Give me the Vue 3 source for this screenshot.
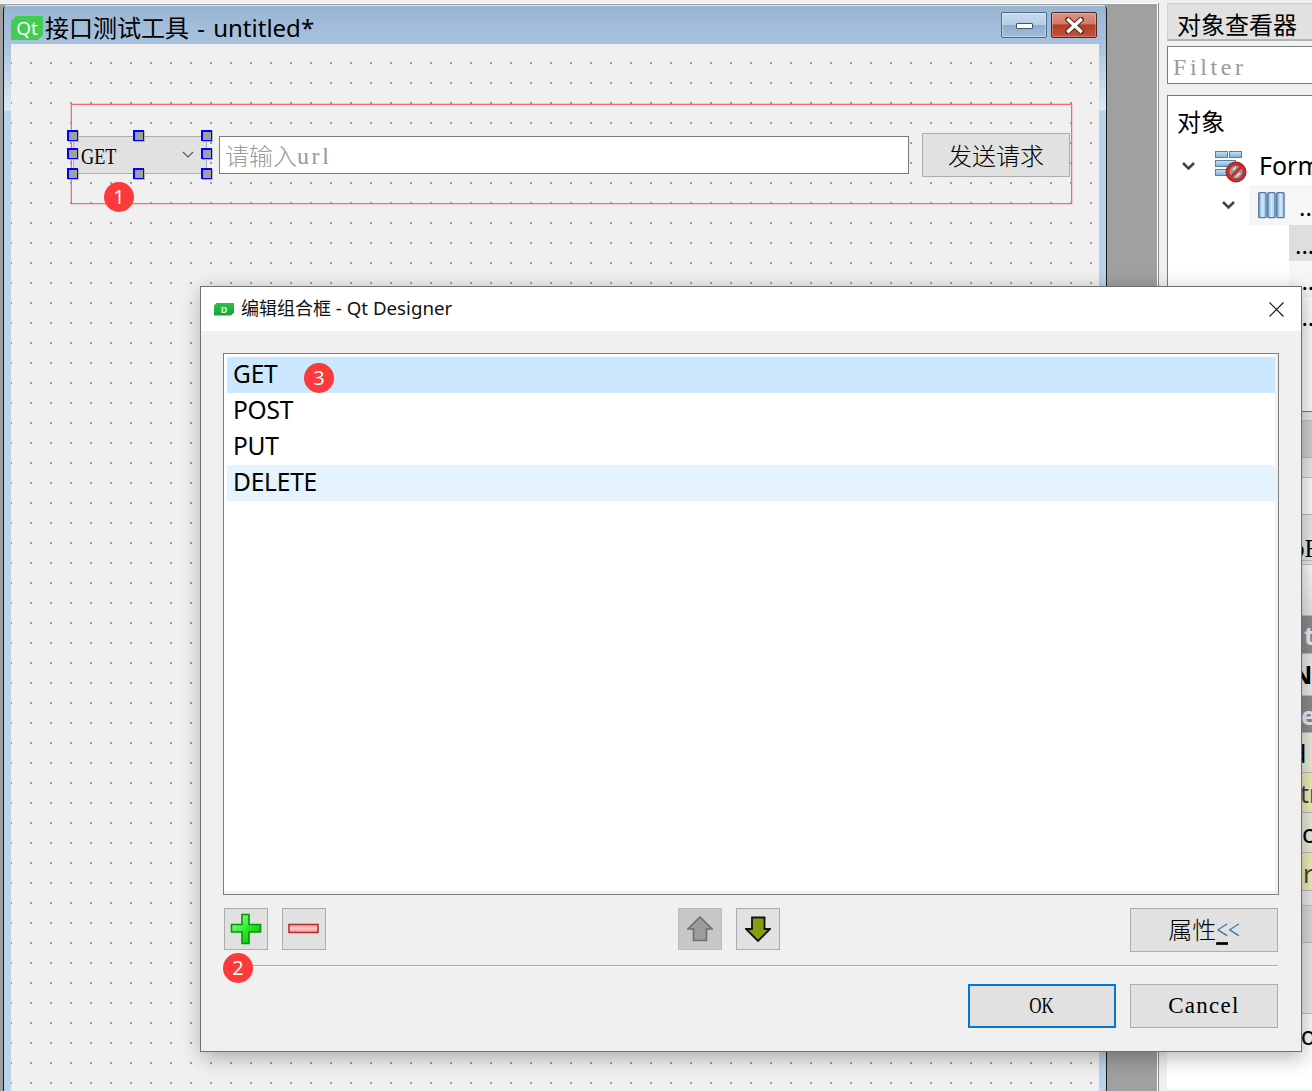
<script setup>
const handles = [
  { x: 0, y: 0 }, { x: 66, y: 0 }, { x: 134, y: 0 },
  { x: 0, y: 18 }, { x: 134, y: 18 },
  { x: 0, y: 38 }, { x: 66, y: 38 }, { x: 134, y: 38 },
]
const items = [
  { label: 'GET', cls: 'selected' },
  { label: 'POST', cls: '' },
  { label: 'PUT', cls: '' },
  { label: 'DELETE', cls: 'hover' },
]
const propRows = [
  { h: 9, cls: 'pale' },
  { h: 37, cls: 'mid' },
  { h: 20, cls: 'pale' },
  { h: 37, cls: 'blank' },
  { h: 46, cls: 'pale serif', text: 'bE', pad: 125 },
  { h: 4, cls: 'pale' },
  { h: 51, cls: 'fade' },
  { h: 38, cls: 'dark', text: 't', pad: 137 },
  { h: 42, cls: 'pale bold', text: 'N.', pad: 125 },
  { h: 37, cls: 'dark', text: 'e', pad: 134 },
  { h: 40, cls: 'cream', text: 'd', pad: 124 },
  { h: 40, cls: 'yellow', text: 'tr', pad: 133 },
  { h: 40, cls: 'cream', text: 'c', pad: 135 },
  { h: 38, cls: 'yellow', text: 'r', pad: 136 },
  { h: 15, cls: 'pale' },
  { h: 37, cls: 'mid2' },
  { h: 71, cls: 'pale' },
  { h: 75, cls: 'blank', text: 'ro', pad: 124, top: true },
]
</script>

<template>
  <div class="desktop">
    <div class="mdi">
      <div class="window">
        <div class="titlebar">
          <span class="qt-logo">Qt</span>
          <span class="win-title">接口测试工具 - untitled*</span>
          <div class="win-buttons">
            <div class="win-btn min"><i class="dash"></i></div>
            <div class="win-btn close">
              <svg width="19" height="17" viewBox="0 0 19 17">
                <path d="M3 2.5 L16 14.5 M16 2.5 L3 14.5" stroke="#5a2a22" stroke-width="5.5" stroke-linecap="square" />
                <path d="M3.5 3 L15.5 14 M15.5 3 L3.5 14" stroke="#fff" stroke-width="3.4" stroke-linecap="square" />
              </svg>
            </div>
          </div>
        </div>
        <div class="canvas">
          <div class="form">
            <div class="combo">
              <span class="get-text">GET</span>
              <svg class="combo-arrow" width="12" height="7" viewBox="0 0 12 7">
                <path d="M1 1 L6 6 L11 1" fill="none" stroke="#555" stroke-width="1.1" />
              </svg>
              <i
                v-for="(h, i) in handles"
                :key="i"
                class="handle"
                :style="{ left: h.x + 'px', top: h.y + 'px' }"
              ></i>
            </div>
            <div class="line-edit">请输入<span class="url">url</span></div>
            <div class="send">发送请求</div>
          </div>
        </div>
      </div>
      <span class="badge b1">1</span>
    </div>

    <div class="panel">
      <div class="panel-head">对象查看器</div>
      <div class="filter">Filter</div>
      <div class="tree">
        <div class="tree-col">对象</div>
        <div class="tree-row form-row">
          <svg class="chev" width="15" height="10" viewBox="0 0 15 10">
            <path d="M2 2 L7.5 7.5 L13 2" fill="none" stroke="#444" stroke-width="2.6" />
          </svg>
          <svg class="form-icon" width="33" height="33" viewBox="0 0 33 33">
            <defs>
              <linearGradient id="cell" x1="0" x2="0" y1="0" y2="1">
                <stop offset="0" stop-color="#c4e4fa" />
                <stop offset="1" stop-color="#7fb0d8" />
              </linearGradient>
            </defs>
            <g fill="url(#cell)" stroke="#5e7f9f">
              <rect x="1.5" y="1.5" width="12" height="6" />
              <rect x="15.5" y="1.5" width="12" height="6" />
              <rect x="1.5" y="10.5" width="20" height="6" />
              <rect x="1.5" y="19.5" width="14" height="6" />
            </g>
            <circle cx="22" cy="22" r="10" fill="#c4302a" stroke="#a01c1c" />
            <circle cx="22" cy="22" r="6.5" fill="#9a9a9a" />
            <path d="M16 28 L28 16" stroke="#c4302a" stroke-width="3" />
            <path d="M19 20 L22 17 M22 27 L26 23" stroke="#e4e4e4" stroke-width="1.5" />
          </svg>
          <span class="form-name">Form</span>
        </div>
        <div class="tree-row layout-row">
          <svg class="chev" width="15" height="10" viewBox="0 0 15 10">
            <path d="M2 2 L7.5 7.5 L13 2" fill="none" stroke="#444" stroke-width="2.6" />
          </svg>
          <div class="layout-cell">
            <svg class="col-icon" width="27" height="27" viewBox="0 0 27 27">
              <defs>
                <linearGradient id="col" x1="0" x2="1" y1="0" y2="0">
                  <stop offset="0" stop-color="#6fa6d6" />
                  <stop offset="0.5" stop-color="#d6ecfc" />
                  <stop offset="1" stop-color="#8fbde6" />
                </linearGradient>
              </defs>
              <g fill="url(#col)" stroke="#5b79a0" stroke-width="1.3">
                <rect x="0.7" y="0.7" width="7.4" height="25" rx="1" />
                <rect x="9.7" y="0.7" width="7.4" height="25" rx="1" />
                <rect x="18.7" y="0.7" width="7.4" height="25" rx="1" />
              </g>
            </svg>
            <span class="dots">..</span>
          </div>
        </div>
        <div class="tree-row child selected-child"><span class="dots">...</span></div>
        <div class="tree-row child light-child"><span class="dots">...</span></div>
        <div class="tree-row child"><span class="dots">...</span></div>
      </div>
      <div class="props">
        <div
          v-for="(r, i) in propRows"
          :key="i"
          class="prop"
          :class="[r.cls, { 'at-top': r.top }]"
          :style="{ height: r.h + 'px', paddingLeft: (r.pad || 125) + 'px' }"
        >{{ r.text }}</div>
      </div>
    </div>

    <div class="dialog">
      <div class="dlg-title">
        <span class="d-logo">D</span>
        <span class="dlg-text">编辑组合框<span class="dlg-latin"> - Qt Designer</span></span>
        <svg class="dlg-close" width="15" height="15" viewBox="0 0 15 15">
          <path d="M0.5 0.5 L14.5 14.5 M14.5 0.5 L0.5 14.5" stroke="#111" stroke-width="1.1" />
        </svg>
      </div>
      <div class="dlg-body">
        <div class="list">
          <div v-for="it in items" :key="it.label" class="list-item" :class="it.cls">{{ it.label }}</div>
          <span class="badge b3">3</span>
        </div>
        <div class="tools">
          <div class="tool">
            <svg width="32" height="32" viewBox="0 0 32 32">
              <defs>
                <linearGradient id="plusG" x1="0" x2="1" y1="0" y2="1">
                  <stop offset="0" stop-color="#b8f8b0" />
                  <stop offset="0.5" stop-color="#30e830" />
                  <stop offset="1" stop-color="#00b400" />
                </linearGradient>
              </defs>
              <path d="M12 1.5 H19 V11.5 H30.5 V19 H19 V30.5 H12 V19 H1.5 V11.5 H12 Z" fill="url(#plusG)" stroke="#009a00" stroke-width="1.6" />
            </svg>
          </div>
          <div class="tool">
            <svg width="32" height="12" viewBox="0 0 32 12">
              <defs>
                <linearGradient id="minusG" x1="0" x2="0" y1="0" y2="1">
                  <stop offset="0" stop-color="#ff9a9a" />
                  <stop offset="0.5" stop-color="#ffc4c4" />
                  <stop offset="1" stop-color="#ff8c8c" />
                </linearGradient>
              </defs>
              <rect x="1" y="1.5" width="29" height="8" fill="url(#minusG)" stroke="#b43232" stroke-width="1.6" />
            </svg>
          </div>
          <div class="tool-gap"></div>
          <div class="tool disabled">
            <svg width="26" height="26" viewBox="0 0 26 26">
              <path d="M13 1 L25 13 H19.5 V24.5 H6.5 V13 H1 Z" fill="#9c9c9c" stroke="#6e6e6e" stroke-width="1.6" />
            </svg>
          </div>
          <div class="tool">
            <svg width="26" height="26" viewBox="0 0 26 26">
              <path d="M7 1.5 H19.5 V13 H25 L13 25 L1 13 H7 Z" fill="#8a9c14" stroke="#111" stroke-width="1.8" />
            </svg>
          </div>
          <div class="prop-btn">属性<span class="lt"><u>&lt;</u>&lt;</span></div>
        </div>
        <div class="sep"><span class="badge b2">2</span></div>
        <div class="actions">
          <div class="act ok"><span class="ok-text">OK</span></div>
          <div class="act"><span class="cancel-text">Cancel</span></div>
        </div>
      </div>
    </div>
  </div>
</template>

<style scoped>
.desktop {
  position: relative;
  display: flex;
  width: 1312px;
  height: 1091px;
  overflow: hidden;
  background: #f0f0f0;
  font-family: "Noto Sans", "Noto Sans CJK SC", sans-serif;
  color: #000;
}
.mdi {
  position: relative;
  flex: 0 0 1157px;
  margin-top: 3px;
  background: #a0a0a0;
  border-top: 1px solid #fbfbfb;
  border-right: 1px solid #fff;
  box-shadow: 1px 0 0 #8a8a8a;
}
.window {
  position: absolute;
  left: 3px;
  top: 1px;
  width: 1104px;
  height: 1200px;
  box-sizing: border-box;
  border: 1px solid #1a1a1a;
  border-top-color: #dfe8f2;
  border-radius: 5px 5px 0 0;
  background: linear-gradient(#9ab5d2 0, #a9c3df 40px, #dce9f6 104px, #b9d3ec 105px, #b9d3ec 100%);
}
.titlebar {
  display: flex;
  align-items: center;
  height: 38px;
  padding: 0 9px 0 7px;
}
.qt-logo {
  display: flex;
  align-items: center;
  justify-content: center;
  width: 32px;
  height: 24px;
  margin-top: 6px;
  background: #41cd52;
  color: #fff;
  font: 19px/24px "Open Sans", sans-serif;
  clip-path: polygon(5px 0, 100% 0, 100% calc(100% - 5px), calc(100% - 5px) 100%, 0 100%, 0 5px);
}
.win-title {
  margin: 6px 0 0 2px;
  font-size: 24px;
  line-height: 30px;
  word-spacing: 2px;
}
.win-buttons {
  display: flex;
  gap: 4px;
  margin-left: auto;
  align-self: flex-start;
  margin-top: 6px;
}
.win-btn {
  display: flex;
  align-items: center;
  justify-content: center;
  box-sizing: border-box;
  width: 46px;
  height: 26px;
  border-radius: 2px;
}
.min {
  border: 1px solid #50698a;
  background: linear-gradient(#c8daed 0, #b6cce4 50%, #8eabcb 52%, #a3bfdb 100%);
  box-shadow: inset 0 0 0 1px rgba(255, 255, 255, 0.35);
}
.dash {
  display: block;
  width: 17px;
  height: 6px;
  margin-top: 1px;
  box-sizing: border-box;
  background: #fff;
  border: 1px solid #3f5570;
  border-radius: 1px;
}
.close {
  border: 1px solid #4e2626;
  background: linear-gradient(#de9284 0, #cf7b6b 45%, #b33f27 50%, #c4533a 100%);
  box-shadow: inset 0 0 0 1px rgba(255, 255, 255, 0.25);
}
.canvas {
  margin: 0 7px;
  height: 1200px;
  padding: 60px 0 0 60px;
  background-color: #f0f0f0;
  background-image: conic-gradient(at 2px 2px, transparent 75%, #9a9a9a 0);
  background-size: 20px 20px;
  background-position: -1px 18px;
}
.form {
  display: flex;
  align-items: flex-start;
  box-sizing: border-box;
  width: 1001px;
  height: 100px;
  padding: 31px 0 0 1px;
  border: 1px solid #f46c72;
  box-shadow: 0 0 0 0.6px rgba(244, 110, 110, 0.45);
}
.combo {
  position: relative;
  display: flex;
  align-items: center;
  box-sizing: border-box;
  width: 134px;
  height: 38px;
  background: #e1e1e1;
  border: 1px solid #adadad;
}
.get-text {
  display: inline-block;
  margin: 2px 0 0 7px;
  font: 24px/30px "Liberation Serif", serif;
  transform: scaleX(0.76);
  transform-origin: left center;
}
.combo-arrow {
  position: absolute;
  left: 108px;
  top: 14px;
}
.handle {
  position: absolute;
  box-sizing: border-box;
  display: block;
  width: 11px;
  height: 11px;
  margin: -7px 0 0 -7px;
  background: #a0a0a0;
  border-style: solid;
  border-width: 2px 1px 1px 2px;
  border-color: #0000ff;
  box-shadow: 1px 1px 0 #b4b4b4;
}
.line-edit {
  display: flex;
  align-items: center;
  box-sizing: border-box;
  width: 690px;
  height: 38px;
  margin-left: 12px;
  padding: 2px 0 0 5px;
  background: #fff;
  border: 1px solid #7a7a7a;
  color: #9a9a9a;
  font-size: 24px;
  font-weight: 300;
  line-height: 34px;
}
.url {
  font-family: "Liberation Serif", serif;
  font-weight: 400;
  letter-spacing: 2.6px;
  font-size: 24px;
}
.send {
  display: flex;
  align-items: center;
  justify-content: center;
  box-sizing: border-box;
  width: 148px;
  height: 44px;
  margin: -3px 0 0 13px;
  padding-top: 1px;
  background: #e1e1e1;
  border: 1px solid #adadad;
  font-size: 24px;
  font-weight: 300;
  line-height: 30px;
}
.badge {
  position: absolute;
  display: flex;
  align-items: center;
  justify-content: center;
  width: 30px;
  height: 30px;
  border-radius: 50%;
  background: #fc3a3c;
  color: #fff;
  font: 20px/30px "Open Sans", sans-serif;
  z-index: 3;
}
.b1 {
  left: 104px;
  top: 178px;
}
.panel {
  flex: 1;
  min-width: 0;
  padding: 3px 0 0 9px;
  overflow: hidden;
}
.panel-head {
  box-sizing: border-box;
  width: 160px;
  height: 38px;
  padding-left: 9px;
  background: #e1e1e1;
  border: 1px solid #d0d0d0;
  border-bottom: 2px solid #b4b4b4;
  font-size: 24px;
  line-height: 42px;
}
.filter {
  box-sizing: border-box;
  width: 160px;
  height: 38px;
  margin-top: 5px;
  padding-left: 5px;
  background: #fff;
  border: 1px solid #7a7a7a;
  color: #9a9a9a;
  font: 24px/40px "Liberation Serif", serif;
  letter-spacing: 3.6px;
}
.tree {
  box-sizing: border-box;
  width: 160px;
  height: 317px;
  margin-top: 11px;
  background: #fff;
  border: 1px solid #7a7a7a;
  border-width: 1px 0 1px 1px;
}
.tree-col {
  height: 51px;
  padding-left: 9px;
  font-size: 24px;
  line-height: 52px;
}
.tree-row {
  display: flex;
  align-items: center;
}
.form-row {
  height: 38px;
  padding-left: 13px;
}
.form-icon {
  margin-left: 18px;
}
.form-name {
  margin: -3px 0 0 12px;
  font-size: 25px;
  line-height: 36px;
}
.layout-row {
  height: 40px;
  padding-left: 53px;
}
.layout-cell {
  display: flex;
  align-items: center;
  flex: 1;
  height: 40px;
  margin-left: 13px;
  padding-left: 9px;
  background: #f6f6f6;
}
.col-icon {
  margin-top: 1px;
}
.dots {
  font-size: 24px;
  line-height: 24px;
  padding-top: 3px;
}
.layout-cell .dots {
  margin-left: 14px;
}
.child {
  height: 36px;
  margin-left: 121px;
  padding-left: 6px;
}
.selected-child {
  background: #dedede;
}
.light-child {
  background: #f7f7f7;
}
.props {
  width: 160px;
}
.prop {
  box-sizing: border-box;
  border-bottom: 1px solid #bcbcbc;
  background: #f0f0f0;
  font-size: 25px;
  line-height: 40px;
  white-space: nowrap;
  overflow: hidden;
}
.prop.pale {
  background: #ececec;
  border-bottom-color: #c4c4c4;
}
.prop.mid {
  background: linear-gradient(90deg, #c2c2c2, #d4d4d4);
}
.prop.mid2 {
  background: #dcdcdc;
}
.prop.blank {
  background: #fff;
}
.prop.fade {
  background: linear-gradient(#fff, #e8e8e8);
}
.prop.dark {
  background: #8e8e8e;
  color: #eaf0f6;
  font-weight: 700;
  line-height: 38px;
}
.prop.cream {
  background: #efefdf;
}
.prop.yellow {
  background: #f0f0bc;
  color: #444;
}
.prop.bold {
  font-weight: 700;
}
.prop.serif {
  font-family: "Liberation Serif", serif;
  line-height: 68px;
}
.prop.at-top {
  line-height: 42px;
  border-bottom: 0;
}
.dialog {
  position: absolute;
  left: 200px;
  top: 286px;
  z-index: 2;
  box-sizing: border-box;
  width: 1102px;
  height: 766px;
  background: #f0f0f0;
  border: 1px solid #6f6f6f;
  box-shadow: 2px 5px 20px rgba(0, 0, 0, 0.3);
}
.dlg-title {
  display: flex;
  align-items: center;
  height: 44px;
  padding: 0 17px 0 13px;
  background: #fff;
}
.d-logo {
  display: flex;
  align-items: center;
  justify-content: center;
  width: 20px;
  height: 13px;
  background: linear-gradient(#2cc24a, #17a036);
  color: #dff5e4;
  font: 700 9px/13px "Open Sans", sans-serif;
  clip-path: polygon(3px 0, 100% 0, 100% calc(100% - 3px), calc(100% - 3px) 100%, 0 100%, 0 3px);
}
.dlg-text {
  margin: -2px 0 0 7px;
  font-size: 18px;
  line-height: 26px;
  color: #111;
  white-space: pre;
}
.dlg-latin {
  font-size: 18.7px;
}
.dlg-close {
  margin-left: auto;
}
.dlg-body {
  display: flex;
  flex-direction: column;
  padding: 22px 22px 0;
}
.list {
  position: relative;
  box-sizing: border-box;
  height: 542px;
  padding: 3px;
  background: #fff;
  border: 1px solid #7f7f7f;
  box-shadow: inset -3px -3px 0 #f1f1f1;
}
.list-item {
  height: 36px;
  padding-left: 6px;
  font-size: 24.5px;
  letter-spacing: -0.2px;
  line-height: 34px;
}
.selected {
  background: #cce8ff;
}
.hover {
  background: #e5f3ff;
}
.b3 {
  left: 80px;
  top: 9px;
}
.tools {
  display: flex;
  align-items: flex-start;
  gap: 14px;
  margin: 13px 1px 0 0;
  padding-left: 1px;
}
.tool {
  display: flex;
  align-items: center;
  justify-content: center;
  box-sizing: border-box;
  width: 44px;
  height: 42px;
  background: #e1e1e1;
  border: 1px solid #adadad;
}
.tool.disabled {
  background: #c8c8c8;
  border-color: #bcbcbc;
}
.tool-gap {
  width: 324px;
}
.prop-btn {
  display: flex;
  align-items: center;
  justify-content: center;
  box-sizing: border-box;
  width: 148px;
  height: 44px;
  margin-left: auto;
  background: #e1e1e1;
  border: 1px solid #adadad;
  font-size: 24px;
  font-weight: 300;
  line-height: 30px;
}
.lt {
  display: inline-block;
  font-family: "Liberation Serif", serif;
  font-size: 21px;
  color: #2a6fa8;
  transform: scaleY(1.35);
}
.lt u {
  text-decoration-color: #000;
  text-underline-offset: 2px;
}
.sep {
  position: relative;
  height: 2px;
  margin: 13px 1px 0 3px;
  background: #a8a8a8;
  border-bottom: 1px solid #fff;
  box-sizing: border-box;
}
.b2 {
  left: -3px;
  top: -12px;
}
.actions {
  display: flex;
  justify-content: flex-end;
  gap: 14px;
  margin: 17px 1px 0 0;
}
.act {
  display: flex;
  align-items: center;
  justify-content: center;
  box-sizing: border-box;
  width: 148px;
  height: 44px;
  background: #e1e1e1;
  border: 1px solid #adadad;
  font: 23px/30px "Liberation Serif", serif;
}
.act.ok {
  border: 2px solid #0078d7;
}
.ok-text {
  display: inline-block;
  transform: scaleX(0.74);
}
.cancel-text {
  letter-spacing: 1.3px;
}
</style>

<style>
html,
body {
  margin: 0;
  background: #f0f0f0;
  overflow: hidden;
}
</style>
